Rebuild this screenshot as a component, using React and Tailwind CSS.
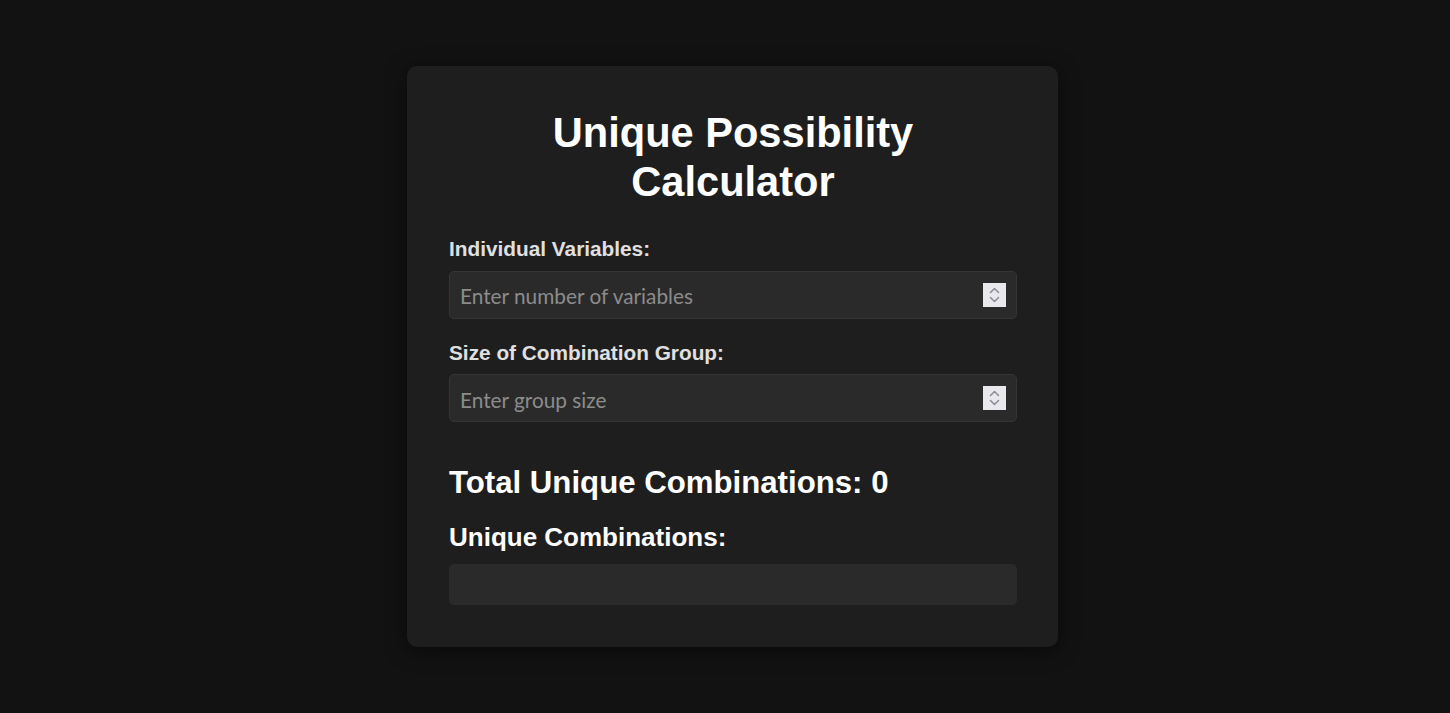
import { useState } from 'react';

function Spinner() {
  return (
    <div className="absolute right-[11px] top-1/2 -translate-y-1/2 w-[23px] h-[24px] bg-[#e9e9ed] flex items-center justify-center">
      <svg width="13" height="18" viewBox="0 0 13 18" fill="none" stroke="#8e8e9a" strokeWidth="1.6" strokeLinecap="round" strokeLinejoin="round">
        <path d="M2.5 6.5 L6.5 2.5 L10.5 6.5" />
        <path d="M2.5 11.5 L6.5 15.5 L10.5 11.5" />
      </svg>
    </div>
  );
}

function NumberField({ placeholder, value, onChange }) {
  return (
    <div className="relative h-[48px]">
      <input
        type="text"
        inputMode="numeric"
        value={value}
        onChange={(e) => onChange(e.target.value)}
        placeholder={placeholder}
        className="w-full h-full bg-[#2a2a2a] border border-[#353535] rounded-[5px] pl-[10px] pr-[44px] pt-[2px] text-[20.8px] text-white placeholder:text-[#8c8c8c] outline-none font-['Lato',sans-serif]"
      />
      <Spinner />
    </div>
  );
}

function combos(n, k) {
  n = parseInt(n, 10);
  k = parseInt(k, 10);
  if (!n || !k || k > n || k < 0) return 0;
  let r = 1;
  for (let i = 1; i <= k; i++) r = (r * (n - k + i)) / i;
  return Math.round(r);
}

export default function App() {
  const [vars, setVars] = useState('');
  const [size, setSize] = useState('');

  return (
    <div className="min-h-screen bg-[#121212] flex items-center justify-center pl-[15px] font-['Liberation_Sans',Arial,sans-serif]">
      <div className="w-[651px] bg-[#1e1e1e] rounded-[10px] pl-[42px] pr-[41px] pt-[42px] pb-[42px] shadow-[0_4px_20px_rgba(0,0,0,0.5)]">
        <h1 className="text-[41.6px] leading-[49px] font-bold text-center text-white mb-[31.6px]">
          Unique Possibility Calculator
        </h1>

        <label className="block text-[20.8px] leading-[1.15] font-bold text-[#e0e0e0] mb-[9.5px]">
          Individual Variables:
        </label>
        <NumberField placeholder="Enter number of variables" value={vars} onChange={setVars} />

        <label className="block text-[20.8px] leading-[1.15] font-bold text-[#e0e0e0] mt-[22px] mb-[10px]">
          Size of Combination Group:
        </label>
        <NumberField placeholder="Enter group size" value={size} onChange={setSize} />

        <h2 className="text-[31.2px] leading-[1.15] font-bold text-white mt-[42.6px]">
          Total Unique Combinations: {combos(vars, size)}
        </h2>

        <h3 className="text-[26px] leading-[1.15] font-bold text-white mt-[22.3px]">
          Unique Combinations:
        </h3>
        <div className="mt-[11.3px] h-[41px] bg-[#2a2a2a] rounded-[5px]"></div>
      </div>
    </div>
  );
}
